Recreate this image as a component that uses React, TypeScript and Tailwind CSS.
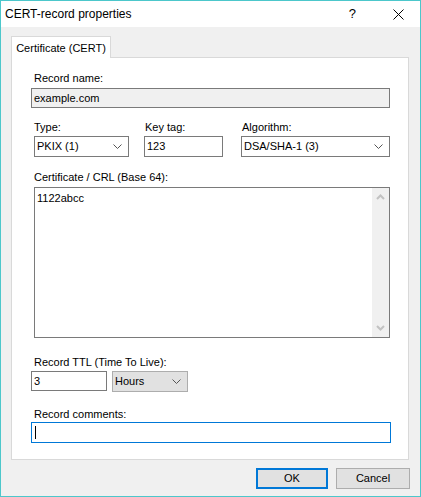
import React from "react";

const Chevron = ({ className = "" }: { className?: string }) => (
  <svg width="9" height="5" viewBox="0 0 9 5" className={className}>
    <polyline points="0.5,0.5 4.5,4.5 8.5,0.5" fill="none" stroke="#555" strokeWidth="1" />
  </svg>
);

const Combo = ({ value, className }: { value: string; className: string }) => (
  <div className={`flex h-[21px] items-center justify-between border pl-[2px] pr-[6px] ${className}`}>
    <span>{value}</span>
    <Chevron />
  </div>
);

const ScrollArrow = ({ up }: { up?: boolean }) => (
  <svg width="9" height="6" viewBox="0 0 9 6">
    <polyline
      points={up ? "1,5 4.5,1.5 8,5" : "1,1 4.5,4.5 8,1"}
      fill="none"
      stroke="#c2c2c2"
      strokeWidth="2"
    />
  </svg>
);

const Label = ({ children, className = "" }: { children: React.ReactNode; className?: string }) => (
  <div className={`h-[13px] leading-[13px] ${className}`}>{children}</div>
);

export default function App() {
  return (
    <div className="flex h-[497px] w-[421px] flex-col border border-[#4cc7cb] bg-[#f0f0f0] font-['Liberation_Sans',Arial,sans-serif] text-[11px] text-black">
      {/* title bar */}
      <div className="flex h-[26px] items-center bg-white pl-[4px] pr-[16px] text-[12px]">
        <span className="flex-1">CERT-record properties</span>
        <span className="mr-[37px] text-[13px]">?</span>
        <svg width="11" height="11" viewBox="0 0 11 11">
          <path d="M0.5 0.5 L10.5 10.5 M10.5 0.5 L0.5 10.5" stroke="#000" strokeWidth="1" />
        </svg>
      </div>

      {/* tab */}
      <div className="pl-[10px] pt-[9px]">
        <div className="relative z-10 -mb-px flex h-[22px] w-[100px] items-center justify-center border border-b-0 border-[#d9d9d9] bg-white pt-[1px]">
          Certificate (CERT)
        </div>
      </div>

      {/* panel */}
      <div className="ml-[10px] flex h-[403px] w-[398px] flex-col border border-[#d9d9d9] bg-white">
        <Label className="ml-[22px] mt-[14px]">Record name:</Label>
        <div className="ml-[19px] mt-[3px] flex h-[20px] w-[359px] items-center border border-[#7a7a7a] bg-[#f0f0f0] pl-[2px]">
          example.com
        </div>

        <div className="mt-[13px] flex">
          <Label className="ml-[22px] w-[111px]">Type:</Label>
          <Label className="w-[97px]">Key tag:</Label>
          <Label>Algorithm:</Label>
        </div>
        <div className="mt-[2px] flex">
          <Combo value="PKIX (1)" className="ml-[22px] w-[95px] border-[#7a7a7a] bg-white" />
          <div className="ml-[15px] flex h-[21px] w-[79px] items-center border border-[#7a7a7a] pl-[2px]">123</div>
          <Combo value="DSA/SHA-1 (3)" className="ml-[18px] w-[149px] border-[#7a7a7a] bg-white" />
        </div>

        <Label className="ml-[22px] mt-[14px]">Certificate / CRL (Base 64):</Label>
        <div className="ml-[22px] mt-[3px] flex h-[151px] w-[356px] border border-[#7a7a7a]">
          <div className="flex-1 pl-[2px] pt-[2px]">1122abcc</div>
          <div className="flex w-[17px] flex-col items-center justify-between bg-[#f0f0f0] py-[6px]">
            <ScrollArrow up />
            <ScrollArrow />
          </div>
        </div>

        <Label className="ml-[22px] mt-[18px]">Record TTL (Time To Live):</Label>
        <div className="mt-[2px] flex">
          <div className="ml-[19px] flex h-[20px] w-[76px] items-center border border-[#7a7a7a] pl-[2px]">3</div>
          <Combo value="Hours" className="ml-[5px] w-[76px] border-[#adadad] bg-[#e1e1e1]" />
        </div>

        <Label className="ml-[22px] mt-[16px]">Record comments:</Label>
        <div className="ml-[19px] mt-[1px] flex h-[21px] w-[360px] items-center border border-[#0078d7] pl-[3px]">
          <div className="h-[13px] w-px bg-black" />
        </div>
      </div>

      {/* buttons */}
      <div className="flex justify-end gap-[8px] pr-[10px] pt-[8px]">
        <button className="h-[21px] w-[72px] border-2 border-[#0078d7] bg-[#e1e1e1] text-[11px]">OK</button>
        <button className="h-[21px] w-[74px] border border-[#adadad] bg-[#e1e1e1] text-[11px]">Cancel</button>
      </div>
    </div>
  );
}
